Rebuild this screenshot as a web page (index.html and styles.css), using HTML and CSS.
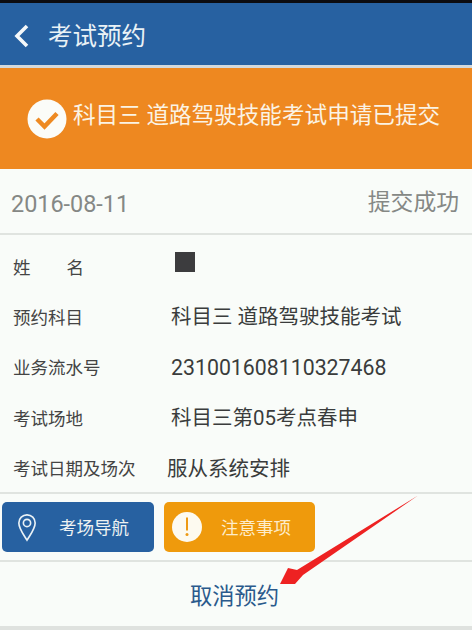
FILE: index.html
```html
<!DOCTYPE html>
<html lang="zh">
<head>
<meta charset="utf-8">
<title>考试预约</title>
<link rel="stylesheet" href="styles.css">
</head>
<body>
<div class="page">
  <header class="appbar">
    <svg class="back" viewBox="0 0 16 24" width="16" height="24"><path d="M14 2 4 12l10 10" fill="none" stroke="#f4f8fa" stroke-width="3.600"/></svg>
    <h1 class="title">考试预约</h1>
  </header>
  <section class="banner">
    <svg class="check" viewBox="0 0 40 40" width="40" height="40"><circle cx="20" cy="20" r="19.5" fill="#fbfcf8"/><path d="M10 20l7.500 7.500L30 14.500" fill="none" stroke="#ee8a22" stroke-width="4.500"/></svg>
    <span class="banner-text">科目三 道路驾驶技能考试申请已提交</span>
  </section>
  <section class="status">
    <span class="date">2016-08-11</span>
    <span class="state">提交成功</span>
  </section>
  <section class="details">
    <div class="row"><span class="label">姓<span class="gap"></span>名</span><span class="redact"></span></div>
    <div class="row"><span class="label">预约科目</span><span class="value">科目三 道路驾驶技能考试</span></div>
    <div class="row"><span class="label">业务流水号</span><span class="value value-num">231001608110327468</span></div>
    <div class="row"><span class="label">考试场地</span><span class="value">科目三第05考点春申</span></div>
    <div class="row row-tight"><span class="label">考试日期及场次</span><span class="value">服从系统安排</span></div>
  </section>
  <section class="actions">
    <a class="btn btn-blue">
      <svg viewBox="0 0 22 32" width="20" height="29"><path d="M11 30C6 22 2 17 2 11a9 9 0 0 1 18 0c0 6-4 11-9 19z" fill="none" stroke="#eaf2f6" stroke-width="1.800"/><circle cx="11" cy="11" r="4" fill="none" stroke="#eaf2f6" stroke-width="1.800"/></svg>
      <span class="btn-text">考场导航</span>
    </a>
    <a class="btn btn-orange">
      <svg viewBox="0 0 30 30" width="30" height="30"><circle cx="15" cy="15" r="15" fill="#fdfaf0"/><path d="M15 5.500v13" stroke="#ee9a14" stroke-width="2"/><circle cx="15" cy="22.500" r="1.500" fill="#ee9a14"/></svg>
      <span class="btn-text">注意事项</span>
    </a>
  </section>
  <section class="cancel">取消预约</section>
  <svg class="arrow" viewBox="0 0 472 630" width="472" height="630"><path d="M418 495.500 303 575 295 584 280 584 288 568 297 570z" fill="#ee2222"/></svg>
</div>
</body>
</html>
```
FILE: styles.css
```css
* { box-sizing: border-box; }
html, body { margin: 0; padding: 0; }
body { width: 472px; height: 630px; overflow: hidden; background: #f9fcf9; font-family: Roboto, "Noto Sans CJK SC", sans-serif; }
.page { position: relative; width: 472px; height: 630px; border-top: 3px solid #0c0c10; border-bottom: 4px solid #dfe2df; display: flex; flex-direction: column; }
.appbar { height: 65px; background: #2761a1; border-bottom: 3px solid #d3d9dc; display: flex; align-items: center; padding: 4px 0 0 13px; gap: 19px; }
.back { flex: none; }
.title { margin: 0; font-size: 24.500px; font-weight: 400; color: #eaf2f6; line-height: 1; position: relative; top: 1px; }
.banner { height: 101px; background: #ee8820; display: flex; align-items: center; padding: 0 0 0 27px; gap: 6px; }
.banner-text { font-size: 22.600px; color: #fbf3e4; white-space: nowrap; line-height: 1; margin-top: -4px; }
.check { flex: none; }
.status { height: 66px; border-bottom: 2px solid #e0e4e0; display: flex; align-items: center; justify-content: space-between; padding: 2px 13px 0 11px; color: #858885; }
.date { font-size: 23.400px; line-height: 1; margin-top: 5px; }
.state { font-size: 22.800px; line-height: 1; margin-top: 2px; }
.details { height: 259px; padding-top: 6px; border-bottom: 2px solid #e0e4e0; }
.row { height: 50.400px; display: flex; align-items: center; color: #3a3c3c; }
.label { width: 171px; padding-left: 13px; font-size: 17.500px; white-space: nowrap; flex: none; color: #444; }
.gap { display: inline-block; width: 36px; }
.value { font-size: 20.500px; white-space: nowrap; line-height: 1; margin-top: 2px; }
.value-num { font-size: 21.300px; }
.row-tight .value { margin-left: -4px; }
.redact { width: 20px; height: 20px; margin: -8px 0 0 4px; background: #3c3c3e; }
.actions { height: 68px; padding: 8px 0 0 2px; display: flex; gap: 10px; align-items: flex-start; border-bottom: 2px solid #e0e4e0; }
.btn { height: 50px; border-radius: 5px; display: flex; align-items: center; color: #eef2f2; }
.btn-blue { width: 152px; background: #2761a1; padding-left: 15px; }
.btn-orange { width: 151px; background: #ef9a0c; padding-left: 8px; color: #fdeccb; }
.btn-text { font-size: 17.500px; white-space: nowrap; margin-top: -2px; }
.btn-blue .btn-text { margin-left: 22px; }
.btn-orange .btn-text { margin-left: 19px; }
.cancel { flex: 1; display: flex; align-items: center; justify-content: center; font-size: 22.300px; color: #2a5a8c; padding: 0 3px 0 0; }
.arrow { position: absolute; left: 0; top: -3px; pointer-events: none; }
```
